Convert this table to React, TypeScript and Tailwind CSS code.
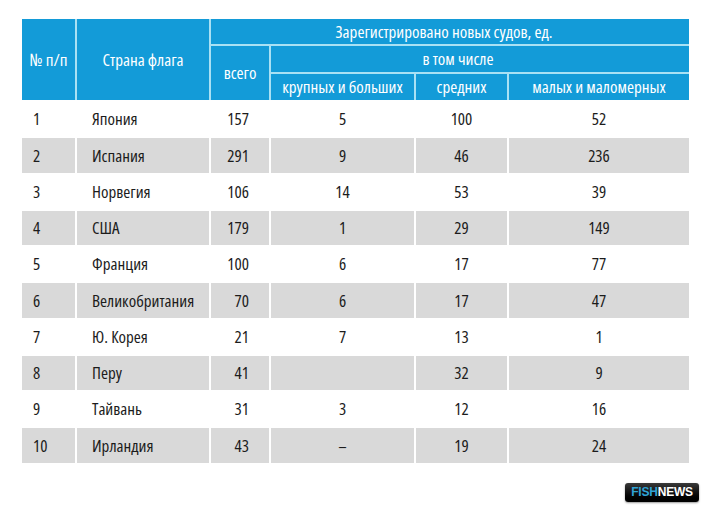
const COLS = 'grid grid-cols-[53px_132px_58px_143px_91px_180px] gap-x-[2px]';

type Row = [string, string, string, string, string, string];

const rows: Row[] = [
    ['1', 'Япония', '157', '5', '100', '52'],
    ['2', 'Испания', '291', '9', '46', '236'],
    ['3', 'Норвегия', '106', '14', '53', '39'],
    ['4', 'США', '179', '1', '29', '149'],
    ['5', 'Франция', '100', '6', '17', '77'],
    ['6', 'Великобритания', '70', '6', '17', '47'],
    ['7', 'Ю. Корея', '21', '7', '13', '1'],
    ['8', 'Перу', '41', '', '32', '9'],
    ['9', 'Тайвань', '31', '3', '12', '16'],
    ['10', 'Ирландия', '43', '–', '19', '24'],
];

function HeaderCell({ className, children }: { className: string; children: React.ReactNode }) {
    return (
        <div className={`flex items-center justify-center bg-[#139bd8] text-white ${className}`}>
            {children}
        </div>
    );
}

function DataRow({ row, shaded }: { row: Row; shaded: boolean }) {
    const bg = shaded ? 'bg-[#d9d9d9]' : 'bg-white';
    return (
        <div className={`${COLS} h-[34.25px] text-[#1c1c1c]`}>
            <div className={`${bg} flex items-center pl-[11px]`}>{row[0]}</div>
            <div className={`${bg} flex items-center pl-[15px]`}>{row[1]}</div>
            <div className={`${bg} flex items-center justify-end pr-[20px]`}>{row[2]}</div>
            <div className={`${bg} flex items-center justify-center`}>{row[3]}</div>
            <div className={`${bg} flex items-center justify-center`}>{row[4]}</div>
            <div className={`${bg} flex items-center justify-center`}>{row[5]}</div>
        </div>
    );
}

function FishNewsLogo() {
    return (
        <div className="flex h-[19px] w-[74px] items-center justify-center rounded-[3px] bg-gradient-to-b from-[#3a3a3a] via-[#111111] to-[#000000] font-['Liberation_Sans',Arial,sans-serif] text-[12px] font-bold tracking-[-0.2px] [font-stretch:100%] shadow-[0_1px_2px_rgba(0,0,0,0.4)]">
            <span className="text-[#2fa3d6]">FISH</span>
            <span className="text-white">NEWS</span>
        </div>
    );
}

export default function App() {
    return (
        <div className="h-[512px] w-[709px] bg-white pl-[22px] pt-[19px] font-['Open_Sans',sans-serif] text-[17px] [font-stretch:75%]">
            {/* header */}
            <div className={`${COLS} w-fit grid-rows-[25px_26px_26px] gap-y-[2px] bg-[#a9e1f4]`}>
                <HeaderCell className="row-span-3">№ п/п</HeaderCell>
                <HeaderCell className="row-span-3">Страна флага</HeaderCell>
                <HeaderCell className="col-span-4 pr-[12px]">Зарегистрировано новых судов, ед.</HeaderCell>
                <HeaderCell className="row-span-2">всего</HeaderCell>
                <HeaderCell className="col-span-3 pr-[44px]">в том числе</HeaderCell>
                <HeaderCell className="">крупных и больших</HeaderCell>
                <HeaderCell className="">средних</HeaderCell>
                <HeaderCell className="">малых и маломерных</HeaderCell>
            </div>

            {/* body */}
            <div className="mt-[2px] flex flex-col gap-[2px]">
                {rows.map((row, i) => (
                    <DataRow key={row[0]} row={row} shaded={i % 2 === 1} />
                ))}
            </div>

            <div className="mt-[20px] flex justify-end pr-[10px]">
                <FishNewsLogo />
            </div>
        </div>
    );
}
